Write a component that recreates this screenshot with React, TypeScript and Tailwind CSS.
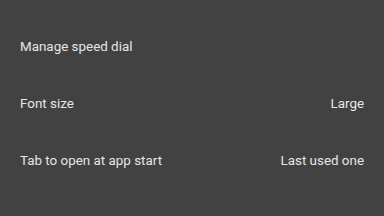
const rows: { label: string; value?: string }[] = [
  { label: 'Manage speed dial' },
  { label: 'Font size', value: 'Large' },
  { label: 'Tab to open at app start', value: 'Last used one' },
];

function App() {
  return (
    <div
      className="w-full h-screen bg-[#424242] pt-[18px] text-[#e6e6e6]"
      style={{ fontFamily: 'Roboto, "Noto Sans", sans-serif' }}
    >
      {rows.map((row) => (
        <div key={row.label} className="h-[57px] flex items-center justify-between pl-5 pr-5">
          <span className="text-[13.4px] leading-5">{row.label}</span>
          {row.value && <span className="text-[13.4px] leading-5">{row.value}</span>}
        </div>
      ))}
    </div>
  );
}

export default App;
